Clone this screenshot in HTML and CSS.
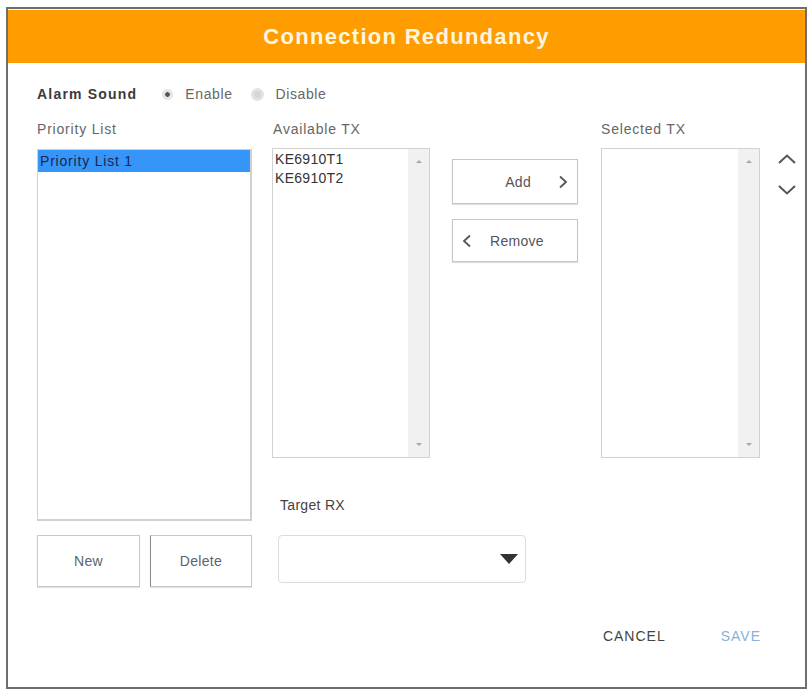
FILE: index.html
```html
<!DOCTYPE html>
<html lang="en">
<head>
<meta charset="utf-8">
<title>Connection Redundancy</title>
<link rel="stylesheet" href="styles.css">
</head>
<body>
<div class="dialog">
  <div class="header">Connection Redundancy</div>
  <div class="content">
    <div class="alarm-row">
      <span class="alarm-label">Alarm Sound</span>
      <span class="radio radio-on"></span><span class="radio-text">Enable</span>
      <span class="radio radio-off"></span><span class="radio-text">Disable</span>
    </div>
    <div class="grid">
      <div class="label lbl-priority">Priority List</div>
      <div class="label lbl-available">Available TX</div>
      <div class="label lbl-selected">Selected TX</div>

      <div class="listbox priority-box">
        <div class="item selected">Priority List 1</div>
      </div>

      <div class="listbox tx-box available-box">
        <div class="tx-items">
          <div class="item">KE6910T1</div>
          <div class="item">KE6910T2</div>
        </div>
        <div class="scrollbar"><span class="sb-up"></span><span class="sb-down"></span></div>
      </div>

      <div class="transfer">
        <div class="btn btn-add"><span>Add</span>
          <svg class="chev" width="10" height="14" viewBox="0 0 10 14"><polyline points="2,1.5 8,7 2,12.5" fill="none" stroke="#555" stroke-width="1.8"/></svg>
        </div>
        <div class="btn btn-remove">
          <svg class="chev" width="10" height="14" viewBox="0 0 10 14"><polyline points="8,1.5 2,7 8,12.5" fill="none" stroke="#555" stroke-width="1.8"/></svg>
          <span>Remove</span>
        </div>
      </div>

      <div class="listbox tx-box selected-box">
        <div class="tx-items"></div>
        <div class="scrollbar"><span class="sb-up"></span><span class="sb-down"></span></div>
      </div>

      <div class="order">
        <svg width="20" height="12" viewBox="0 0 20 12"><polyline points="2,10 10,2.5 18,10" fill="none" stroke="#555" stroke-width="2"/></svg>
        <svg width="20" height="12" viewBox="0 0 20 12"><polyline points="2,2 10,9.5 18,2" fill="none" stroke="#555" stroke-width="2"/></svg>
      </div>

      <div class="label lbl-target">Target RX</div>

      <div class="list-buttons">
        <div class="btn btn-new">New</div>
        <div class="btn btn-delete">Delete</div>
      </div>

      <div class="dropdown"><span class="caret"></span></div>
    </div>
    <div class="footer">
      <span class="action cancel">CANCEL</span>
      <span class="action save">SAVE</span>
    </div>
  </div>
</div>
</body>
</html>
```
FILE: styles.css
```css
html, body {
  margin: 0;
  padding: 0;
  background: #ffffff;
}
body {
  font-family: "Liberation Sans", Arial, sans-serif;
  color: #555;
}
.dialog {
  margin: 7px 2px 0 6px;
  width: 797px;
  height: 678px;
  border: 2px solid #6e6e6e;
  background: #fff;
}
.header {
  height: 53px;
  margin-top: 1px;
  background: #ff9c00;
  color: #fff6e0;
  font-weight: bold;
  font-size: 22px;
  letter-spacing: 1.3px;
  line-height: 53px;
  text-align: center;
}
.content {
  padding-left: 29px;
}
.alarm-row {
  display: flex;
  align-items: center;
  height: 18px;
  margin-top: 22px;
  font-size: 14px;
}
.alarm-label {
  font-weight: bold;
  color: #3a3a3a;
  letter-spacing: 1.2px;
  margin-right: 25px;
}
.radio {
  display: inline-block;
  border-radius: 50%;
  box-sizing: border-box;
}
.radio-on {
  width: 11px;
  height: 11px;
  background: radial-gradient(circle, #555 0 2px, #e4e4e4 2.6px);
  margin-right: 12px;
}
.radio-off {
  width: 13px;
  height: 13px;
  background: radial-gradient(circle, #d6d6d6 0 3px, #e2e2e2 4px);
  margin-left: 18px;
  margin-right: 12px;
}
.radio-text {
  color: #666;
  letter-spacing: 0.6px;
}
.grid {
  display: grid;
  grid-template-columns: 215px 160px 129px 159px 20px;
  grid-template-rows: 28px 310px 77px 52px;
  column-gap: 20px;
  margin-top: 17px;
}
.label {
  font-size: 14px;
  line-height: 18px;
  color: #666;
  letter-spacing: 0.8px;
}
.lbl-priority { grid-column: 1; grid-row: 1; }
.lbl-available { grid-column: 2; grid-row: 1; margin-left: 1px; }
.lbl-selected { grid-column: 4; grid-row: 1; }
.listbox {
  border: 1px solid #cacaca;
  box-sizing: border-box;
  background: #fff;
}
.priority-box {
  grid-column: 1;
  grid-row: 2 / 4;
  margin-top: 1px;
  margin-bottom: 14px;
  border-width: 1px 2px 2px 1px;
  border-color: #d0d0d0;
}
.item {
  font-size: 14px;
  line-height: 20px;
  color: #333;
  padding-left: 2px;
}
.item.selected {
  background: #3595f8;
  color: #1d2450;
  height: 22px;
  line-height: 22px;
  letter-spacing: 0.8px;
}
.tx-box {
  display: flex;
  width: 158px;
  border-color: #d2d2d2;
}
.available-box { grid-column: 2; grid-row: 2; }
.selected-box { grid-column: 4; grid-row: 2; width: 159px; }
.tx-items {
  flex: 1;
  padding-top: 1px;
}
.tx-items .item {
  line-height: 19px;
  letter-spacing: 0.3px;
  padding-left: 2px;
}
.scrollbar {
  width: 21px;
  background: #f1f1f1;
  display: flex;
  flex-direction: column;
  justify-content: space-between;
  align-items: center;
  padding: 11px 0 11px;
}
.sb-up, .sb-down {
  width: 0;
  height: 0;
  border-left: 3px solid transparent;
  border-right: 3px solid transparent;
}
.sb-up { border-bottom: 3px solid #a9a9a9; }
.sb-down { border-top: 3px solid #a9a9a9; }
.transfer {
  grid-column: 3;
  grid-row: 2;
  display: flex;
  flex-direction: column;
  gap: 15px;
  padding-top: 11px;
}
.btn {
  box-sizing: border-box;
  border: 1px solid #c6c6c6;
  box-shadow: 0 1px 1px rgba(0, 0, 0, 0.12);
  background: #fff;
  font-size: 14px;
  color: #555;
  letter-spacing: 0.3px;
  display: flex;
  align-items: center;
}
.btn-add, .btn-remove {
  width: 126px;
  height: 45px;
}
.btn-add {
  justify-content: flex-end;
  gap: 27px;
  padding-right: 9px;
}
.btn-remove {
  height: 43px;
  gap: 18px;
  padding-left: 9px;
}
.chev { display: block; }
.order {
  grid-column: 5;
  grid-row: 2;
  display: flex;
  flex-direction: column;
  gap: 19px;
  padding-top: 5px;
  margin-left: -3px;
}
.order svg { display: block; }
.lbl-target {
  grid-column: 2;
  grid-row: 3;
  align-self: end;
  margin: 0 0 21px 8px;
  color: #444;
  letter-spacing: 0.3px;
}
.list-buttons {
  grid-column: 1;
  grid-row: 4;
  display: flex;
  gap: 10px;
}
.btn-new, .btn-delete {
  width: 103px;
  height: 52px;
  justify-content: center;
  color: #5a6470;
  border-color: #c9c9c9;
}
.btn-delete {
  width: 102px;
  border-left-color: #8a8a8a;
}
.dropdown {
  grid-column: 2 / 4;
  grid-row: 4;
  justify-self: start;
  margin-left: 6px;
  width: 248px;
  height: 48px;
  box-sizing: border-box;
  border: 1px solid #dcdcdc;
  border-radius: 4px;
  display: flex;
  align-items: center;
  justify-content: flex-end;
  padding-right: 7px;
}
.caret {
  width: 0;
  height: 0;
  border-left: 9px solid transparent;
  border-right: 9px solid transparent;
  border-top: 10px solid #333;
}
.footer {
  display: flex;
  justify-content: flex-end;
  gap: 55px;
  margin-top: 40px;
  padding-right: 44px;
  font-size: 14px;
  line-height: 18px;
  letter-spacing: 1px;
}
.cancel { color: #444; }
.save { color: #86b2d8; }
```
